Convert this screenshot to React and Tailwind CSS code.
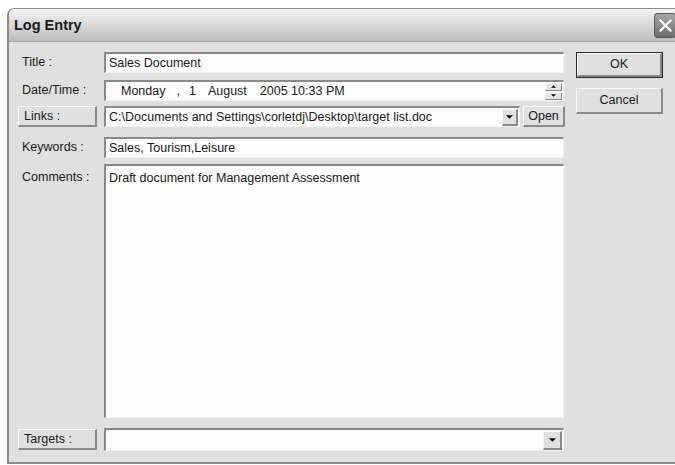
import React from "react";

const font = { fontFamily: '"Liberation Sans", Arial, sans-serif' };

const sunken =
  "border-t-2 border-l-2 border-b border-r border-t-[#8a8a8a] border-l-[#8a8a8a] border-b-[#f4f4f4] border-r-[#f4f4f4] bg-[#fdfdfd]";
const raised =
  "border-t border-l border-b-2 border-r-2 border-t-[#f8f8f8] border-l-[#f8f8f8] border-b-[#8a8a8a] border-r-[#8a8a8a] bg-[#e0e0e0]";

function Arrow({ size = 7 }) {
  return (
    <svg width={size} height={Math.ceil(size / 2)} viewBox="0 0 8 4">
      <path d="M0 0H8L4 4Z" fill="#000" />
    </svg>
  );
}

function DropButton({ className = "" }) {
  return (
    <div className={`flex items-center justify-center ${raised} ${className}`}>
      <Arrow />
    </div>
  );
}

function Label({ children }) {
  return <div className="w-[86px] shrink-0 pl-[4px] text-[12.5px] text-[#1a1a1a]">{children}</div>;
}

function LabelButton({ children }) {
  return (
    <div className="w-[86px] shrink-0">
      <div className={`w-[79px] h-[21px] flex items-center pl-[5px] text-[12.5px] text-[#1a1a1a] ${raised}`}>
        {children}
      </div>
    </div>
  );
}

export default function App() {
  return (
    <div className="w-[675px] h-[465px] bg-white overflow-hidden pl-[7px] pt-[8px] text-[#1a1a1a]" style={font}>
      <div className="h-[456px] w-[700px] flex flex-col border-t border-l-2 border-b-2 border-[#8c8c8c] rounded-tl-[7px] overflow-hidden">
        {/* caption bar */}
        <div className="h-[33px] shrink-0 flex items-center justify-between bg-[linear-gradient(to_bottom,#f4f4f4_0%,#dedede_40%,#c6c6c6_85%,#bcbcbc_100%)] border-b border-[#a8a8a8] pr-[31px]">
          <span className="pl-[5px] pt-[2px] text-[14.5px] font-bold text-[#1a1a1a]">Log Entry</span>
          <div className="w-[22px] h-[25px] mt-[1px] rounded-[3px] border border-[#5a5a5a] bg-[linear-gradient(to_bottom,#a8a8a8,#6c6c6c)] flex items-center justify-center">
            <svg width="13" height="13" viewBox="0 0 13 13">
              <path d="M1.5 1.5L11.5 11.5M11.5 1.5L1.5 11.5" stroke="#fff" strokeWidth="2.2" strokeLinecap="square" />
            </svg>
          </div>
        </div>

        {/* dialog body */}
        <div className="flex-1 bg-[#e0e0e0] flex pl-[9px] pt-[10px]">
          <div className="w-[547px] flex flex-col">
            <div className="flex items-center h-[21px]">
              <Label>Title :</Label>
              <div className={`w-[460px] h-[21px] flex items-center pl-[3px] text-[12.5px] ${sunken}`}>Sales Document</div>
            </div>

            <div className="flex items-center h-[21px] mt-[7px]">
              <Label>Date/Time :</Label>
              <div className={`w-[460px] h-[21px] flex items-center text-[12.5px] ${sunken}`}>
                <span className="ml-[15px]">Monday</span>
                <span className="ml-[11px]">,</span>
                <span className="ml-[9px]">1</span>
                <span className="ml-[12px]">August</span>
                <span className="ml-[13px]">2005 10:33 PM</span>
                <div className="ml-auto mr-[1px] flex flex-col gap-[1px]">
                  <div className="w-[17px] h-[8px] border border-[#f8f8f8] border-b-[#8a8a8a] border-r-[#8a8a8a] bg-[#e4e4e4] flex items-center justify-center">
                    <svg width="5" height="3" viewBox="0 0 6 3"><path d="M0 3H6L3 0Z" fill="#000" /></svg>
                  </div>
                  <div className="w-[17px] h-[8px] border border-[#f8f8f8] border-b-[#8a8a8a] border-r-[#8a8a8a] bg-[#e4e4e4] flex items-center justify-center">
                    <svg width="5" height="3" viewBox="0 0 6 3"><path d="M0 0H6L3 3Z" fill="#000" /></svg>
                  </div>
                </div>
              </div>
            </div>

            <div className="flex items-center h-[21px] mt-[5px]">
              <LabelButton>Links :</LabelButton>
              <div className={`w-[416px] h-[21px] flex items-center pl-[3px] text-[12.5px] ${sunken}`}>
                <span className="flex-1 whitespace-nowrap">C:\Documents and Settings\corletdj\Desktop\target list.doc</span>
                <DropButton className="w-[16px] h-[17px] mr-[1px]" />
              </div>
              <div className={`ml-[3px] w-[42px] h-[21px] flex items-center justify-center text-[12.5px] ${raised}`}>Open</div>
            </div>

            <div className="flex items-center h-[21px] mt-[10px]">
              <Label>Keywords :</Label>
              <div className={`w-[460px] h-[21px] flex items-center pl-[3px] text-[12.5px] ${sunken}`}>Sales, Tourism,Leisure</div>
            </div>

            <div className="flex items-start mt-[6px]">
              <div className="w-[86px] shrink-0 pl-[4px] pt-[4px] text-[12.5px]">Comments :</div>
              <div className={`w-[460px] h-[254px] pl-[3px] pt-[3px] text-[12.5px] ${sunken}`}>
                Draft document for Management Assessment
              </div>
            </div>

            <div className="flex items-center h-[23px] mt-[10px]">
              <LabelButton>Targets :</LabelButton>
              <div className={`w-[460px] h-[23px] flex items-center ${sunken}`}>
                <DropButton className="ml-auto mr-[1px] w-[19px] h-[19px]" />
              </div>
            </div>
          </div>

          <div className="ml-[11px] flex flex-col">
            <div className="w-[87px] h-[26px] border border-[#2a2a2a] flex">
              <div className={`flex-1 flex items-center justify-center text-[12.5px] ${raised}`}>OK</div>
            </div>
            <div className={`mt-[10px] w-[87px] h-[26px] flex items-center justify-center text-[12.5px] ${raised}`}>Cancel</div>
          </div>
        </div>
      </div>
    </div>
  );
}
